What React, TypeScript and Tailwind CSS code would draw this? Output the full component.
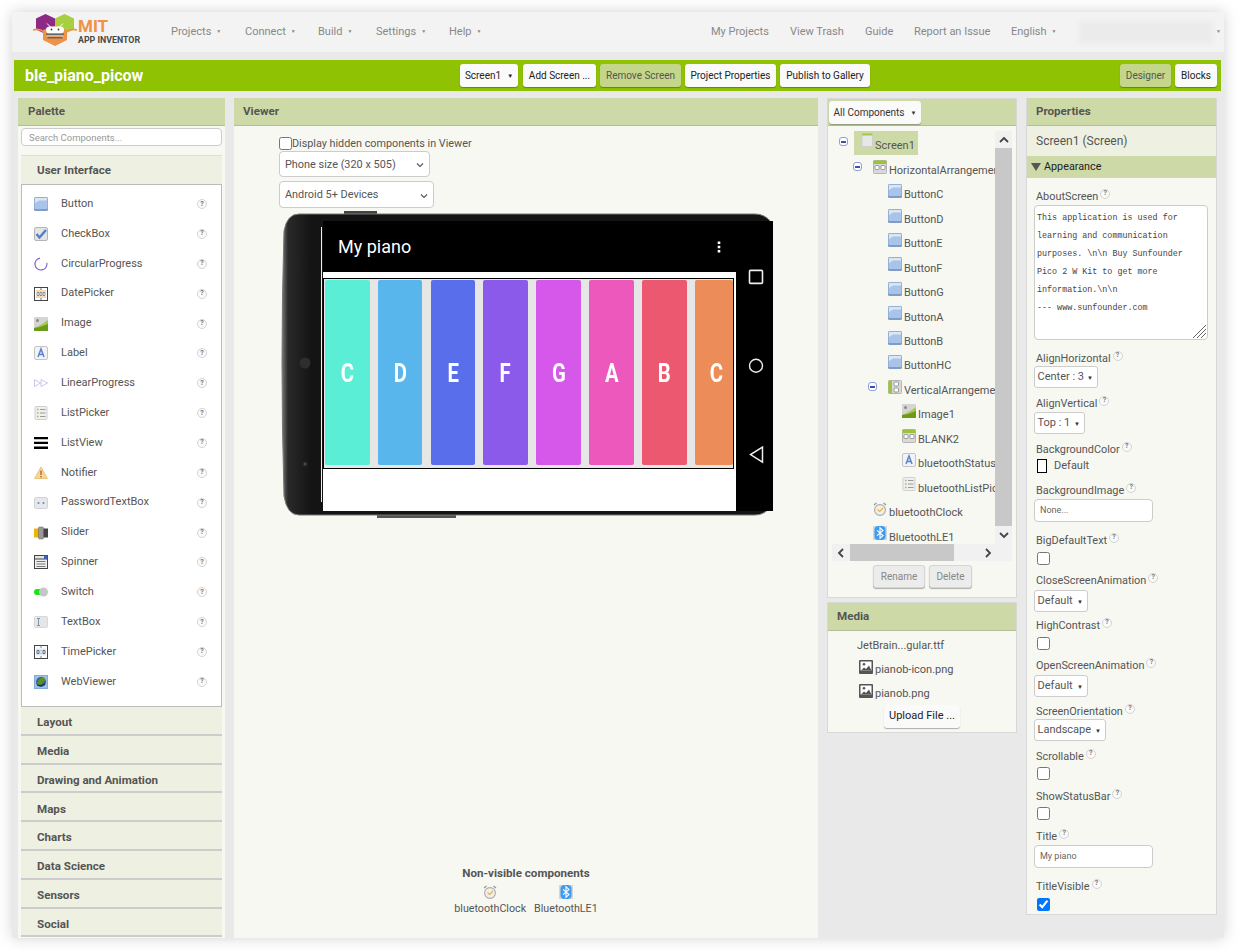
import React from "react";

const font = "font-['Roboto','Liberation_Sans',sans-serif]";

function Icon({ kind, className = "" }: { kind: string; className?: string }) {
  const c = `w-[14px] h-[14px] shrink-0 ${className}`;
  switch (kind) {
    case "button":
      return (
        <svg viewBox="0 0 14 14" className={c}>
          <rect x="0" y="0" width="14" height="14" rx="1.5" fill="#7f9cc9" />
          <rect x="0.5" y="0.5" width="13" height="11.5" rx="1" fill="#a9c4e8" />
          <path d="M1 1h12v2.5H5L1 6z" fill="#dbe6f5" />
        </svg>
      );
    case "checkbox":
      return (
        <svg viewBox="0 0 14 14" className={c}>
          <rect x="0.5" y="0.5" width="13" height="13" rx="1.5" fill="#e4e4e4" stroke="#b5b5b5" />
          <path d="M2.5 7l3 3.5L12 3" fill="none" stroke="#4f7fc9" strokeWidth="2.4" />
        </svg>
      );
    case "circular":
      return (
        <svg viewBox="0 0 14 14" className={c}>
          <path d="M13 7A6 6 0 1 1 7 1" fill="none" stroke="#7b5bc9" strokeWidth="1.1" transform="rotate(-10 7 7)" />
        </svg>
      );
    case "date":
      return (
        <svg viewBox="0 0 14 14" className={c}>
          <rect x="0.5" y="0.5" width="13" height="13" fill="#fff" stroke="#444" />
          <rect x="2" y="3.5" width="10" height="1" fill="#f3b46b" />
          <rect x="2" y="9.5" width="10" height="1" fill="#f3b46b" />
          <path d="M3 5.5h2v3H3zM6 5.5h2v3H6zM9 5.5h2v3H9z" fill="none" stroke="#666" strokeWidth="0.7" />
          <path d="M7 1l1.2 1.5H5.8zM7 13l1.2-1.5H5.8z" fill="#555" />
        </svg>
      );
    case "image":
      return (
        <svg viewBox="0 0 14 14" className={c}>
          <rect width="14" height="14" rx="1" fill="#d5d5d5" />
          <circle cx="3.5" cy="3.5" r="1.5" fill="#8a8a8a" />
          <path d="M0 11Q6 9 14 3v8z" fill="#a3c94a" />
          <path d="M0 11Q8 10 14 7v7H0z" fill="#6e9a1c" />
        </svg>
      );
    case "label":
      return (
        <svg viewBox="0 0 14 14" className={c}>
          <rect x="0.5" y="0.5" width="13" height="13" rx="1.5" fill="#f1f3f8" stroke="#c4c4c4" />
          <path d="M4 11l3-8 3 8M5.2 8.5h3.6" fill="none" stroke="#5b84c8" strokeWidth="1.5" />
        </svg>
      );
    case "linear":
      return (
        <svg viewBox="0 0 14 14" className={c}>
          <path d="M0.5 3.5l6 3.5-6 3.5zM7 3.5l6.5 3.5L7 10.5z" fill="#fff" stroke="#c3b6ea" strokeWidth="0.8" />
        </svg>
      );
    case "listpicker":
      return (
        <svg viewBox="0 0 14 14" className={c}>
          <rect x="1" y="0.5" width="12" height="13" rx="1" fill="#efefef" stroke="#d0d0d0" />
          <path d="M3 3.5h1.5M3 7h1.5M3 10.5h1.5" stroke="#9fc23c" strokeWidth="1.4" />
          <path d="M6 3.5h5.5M6 7h5.5M6 10.5h5.5" stroke="#999" strokeWidth="1" />
        </svg>
      );
    case "listview":
      return (
        <svg viewBox="0 0 14 14" className={c}>
          <path d="M0 1h14v2.3H0zM0 5.8h14v2.3H0zM0 10.6h14v2.3H0z" fill="#000" />
        </svg>
      );
    case "notifier":
      return (
        <svg viewBox="0 0 14 14" className={c}>
          <path d="M7 1l6.5 11.5H.5z" fill="#f6d79b" stroke="#e0b35c" strokeWidth="0.7" />
          <path d="M7 4.5v4.5M7 10v1.5" stroke="#b4662a" strokeWidth="1.4" />
        </svg>
      );
    case "password":
      return (
        <svg viewBox="0 0 14 14" className={c}>
          <rect x="0.5" y="1.5" width="13" height="11" rx="1.5" fill="#e8e8ec" stroke="#d3d3d3" />
          <circle cx="4.5" cy="7" r="1.1" fill="#6d8fcb" />
          <circle cx="9.5" cy="7" r="1.1" fill="#6d8fcb" />
        </svg>
      );
    case "slider":
      return (
        <svg viewBox="0 0 14 14" className={c}>
          <rect x="0" y="2.5" width="6" height="9" fill="#f0b400" />
          <rect x="9" y="2.5" width="5" height="9" fill="#444" />
          <rect x="4.5" y="1" width="5" height="12" rx="1" fill="#999" stroke="#666" strokeWidth="0.5" />
        </svg>
      );
    case "spinner":
      return (
        <svg viewBox="0 0 14 14" className={c}>
          <rect x="0.5" y="0.5" width="13" height="13" fill="#f0f0f0" stroke="#444" />
          <rect x="0.5" y="0.5" width="13" height="3.5" fill="#e5e5e5" stroke="#444" />
          <rect x="10" y="0.5" width="3.5" height="3.5" fill="#3f62b5" />
          <path d="M2.5 6.5h9M2.5 9h9M2.5 11.5h9" stroke="#777" />
        </svg>
      );
    case "switch":
      return (
        <svg viewBox="0 0 14 14" className={c}>
          <rect x="0" y="4" width="10" height="6" rx="3" fill="#15e615" />
          <circle cx="9.5" cy="7" r="4.5" fill="#c6c6c6" />
        </svg>
      );
    case "textbox":
      return (
        <svg viewBox="0 0 14 14" className={c}>
          <rect x="0.5" y="1.5" width="13" height="11" rx="1" fill="#e6e6e6" stroke="#d8d8d8" />
          <path d="M3 3.5h3M3 10.5h3M4.5 3.5v7" stroke="#7d92b9" fill="none" />
        </svg>
      );
    case "time":
      return (
        <svg viewBox="0 0 14 14" className={c}>
          <rect x="0.5" y="0.5" width="13" height="13" fill="#fff" stroke="#444" />
          <rect x="2" y="3.5" width="10" height="7" fill="#dfeaf7" />
          <path d="M3 5.5h2v3H3zM9 5.5h2v3H9zM7 5.5v.6M7 8v.6" fill="none" stroke="#555" strokeWidth="0.8" />
          <path d="M7 1l1.2 1.5H5.8zM7 13l1.2-1.5H5.8z" fill="#5176b5" />
        </svg>
      );
    case "web":
      return (
        <svg viewBox="0 0 14 14" className={c}>
          <rect width="14" height="14" fill="#9cc0e8" stroke="#6d97cf" />
          <circle cx="7" cy="7" r="5" fill="#2f5ea8" />
          <path d="M3 8Q4 3 9 2.5q3 1 2 3-3 3-5 5-2 0-3-2.5z" fill="#5d8f28" />
          <path d="M3 10q4 2 8-1" stroke="#222" fill="none" />
        </svg>
      );
    case "screen":
      return (
        <svg viewBox="0 0 14 14" className={c}>
          <rect x="2" y="0.5" width="10.5" height="13" rx="1" fill="#e7e7e7" stroke="#cfcfcf" />
          <rect x="2" y="0.5" width="10.5" height="2" fill="#a3c94a" />
        </svg>
      );
    case "hor":
      return (
        <svg viewBox="0 0 14 14" className={c}>
          <rect x="0.5" y="0.5" width="13" height="13" rx="1" fill="#d9d9d9" stroke="#b5b5b5" />
          <rect x="0.5" y="0.5" width="13" height="3.5" fill="#9dc33c" />
          <rect x="2" y="5.5" width="4" height="4" rx="1" fill="#fff" stroke="#777" strokeWidth="0.7" />
          <rect x="8" y="5.5" width="4" height="4" rx="1" fill="#fff" stroke="#777" strokeWidth="0.7" />
        </svg>
      );
    case "ver":
      return (
        <svg viewBox="0 0 14 14" className={c}>
          <rect x="0.5" y="0.5" width="13" height="13" rx="1" fill="#d9d9d9" stroke="#b5b5b5" />
          <rect x="0.5" y="0.5" width="3.5" height="13" fill="#9dc33c" />
          <rect x="6" y="2" width="4.5" height="4" rx="1" fill="#fff" stroke="#777" strokeWidth="0.7" />
          <rect x="6" y="8" width="4.5" height="4" rx="1" fill="#fff" stroke="#777" strokeWidth="0.7" />
        </svg>
      );
    case "clock":
      return (
        <svg viewBox="0 0 14 14" className={c}>
          <circle cx="7" cy="8" r="5.4" fill="#f1efe6" stroke="#aaa" strokeWidth="1.1" />
          <path d="M4.5 7.5l2.2 2L10 6" stroke="#eeb04c" strokeWidth="1.2" fill="none" />
          <path d="M1 3l2.5-2M13 3l-2.5-2" stroke="#999" strokeWidth="1.4" />
        </svg>
      );
    case "ble":
      return (
        <svg viewBox="0 0 14 14" className={c}>
          <rect width="14" height="14" fill="#d5d5d5" />
          <rect x="1.5" y="0" width="11" height="14" rx="4" fill="#3d9bf0" />
          <path d="M4 4.3l6 5.2-3 2.8V1.7l3 2.8-6 5.2" fill="none" stroke="#fff" strokeWidth="1.1" />
        </svg>
      );
    case "media":
      return (
        <svg viewBox="0 0 14 14" className={c}>
          <rect width="14" height="14" rx="1" fill="#555" />
          <rect x="1.5" y="1.5" width="11" height="9" fill="#fff" />
          <circle cx="5" cy="4.3" r="1.3" fill="#555" />
          <path d="M2 10.5l3-3 2 1.5 3-3.5 2.5 5z" fill="#555" />
        </svg>
      );
    default:
      return null;
  }
}

function Logo() {
  return (
    <svg viewBox="0 0 44 36" className="h-[36px] w-[44px] shrink-0">
      <path d="M3 4.5L12.5 0 22 4.5v11L12.5 20 3 15.5z" fill="#8e2a85" />
      <path d="M22 4.5L31.5 0 41 4.5v11L31.5 20 22 15.5z" fill="#a7d041" />
      <path d="M0 16q6-2 11 2M44 16q-6-2-11 2" stroke="#ef9147" strokeWidth="1.6" fill="none" />
      <path d="M10 16l12-4 12 4v10l-12 6-12-6z" fill="#ef9147" />
      <path d="M14 9.5l3.5 3.5M30 9.5L26.5 13" stroke="#fff" strokeWidth="1" />
      <rect x="13" y="12.5" width="18" height="7" rx="3.5" fill="#fff" />
      <circle cx="18.5" cy="15.5" r="0.9" fill="#333" />
      <circle cx="25.5" cy="15.5" r="0.9" fill="#333" />
      <rect x="13" y="19.5" width="18" height="1.6" fill="#666" />
      <rect x="13.5" y="21.1" width="17" height="1.8" fill="#f5b27a" />
      <rect x="14.5" y="22.9" width="15" height="1.6" fill="#666" />
    </svg>
  );
}

function Help({ className = "" }: { className?: string }) {
  return (
    <span className={`flex h-[10px] w-[10px] shrink-0 items-center justify-center rounded-full border border-[#d4d4d4] bg-[#fafafa] text-[7px] font-bold leading-none text-[#777] ${className}`}>
      ?
    </span>
  );
}

function Head({ children }: { children: React.ReactNode }) {
  return (
    <div className="flex h-[28px] items-center border-b border-[#b5bd9d] bg-[#cddaa8] pl-[9px] pt-[1px] text-[11.6px] font-bold text-[#555]">
      {children}
    </div>
  );
}

function Btn({ children, className = "", tone = "bg-[#fafafa] text-[#222]" }: { children: React.ReactNode; className?: string; tone?: string }) {
  return (
    <div className={`flex h-[23px] shrink-0 items-center justify-center whitespace-nowrap rounded-[3px] text-[10px] shadow-[0_1px_1px_rgba(0,0,0,0.3)] ${tone} ${className}`}>
      {children}
    </div>
  );
}

const palette: [string, string][] = [
  ["button", "Button"],
  ["checkbox", "CheckBox"],
  ["circular", "CircularProgress"],
  ["date", "DatePicker"],
  ["image", "Image"],
  ["label", "Label"],
  ["linear", "LinearProgress"],
  ["listpicker", "ListPicker"],
  ["listview", "ListView"],
  ["notifier", "Notifier"],
  ["password", "PasswordTextBox"],
  ["slider", "Slider"],
  ["spinner", "Spinner"],
  ["switch", "Switch"],
  ["textbox", "TextBox"],
  ["time", "TimePicker"],
  ["web", "WebViewer"],
];

const categories = ["Layout", "Media", "Drawing and Animation", "Maps", "Charts", "Data Science", "Sensors", "Social"];

function Palette() {
  return (
    <div className="w-[207px] shrink-0 bg-[#f7f8f2]">
      <Head>
        <span className="ml-px">Palette</span>
      </Head>
      <div className="px-[3px] pt-[2px]">
        <div className="flex h-[18px] items-center rounded-[4px] border border-[#ccc] bg-white pl-[7px] pt-[2px] text-[9.5px] text-[#999]">
          Search Components...
        </div>
        <div className="mt-[9px] flex h-[29px] items-center border-t border-[#ddd] bg-[#eef1e1] pl-[16px] pt-[2px] text-[11.6px] font-bold text-[#555]">
          User Interface
        </div>
        <div className="h-[523px] border border-[#bbb] bg-white pt-[4.15px]">
          {palette.map(([k, n]) => (
            <div key={n} className="flex h-[29.87px] items-center pl-[12px] pr-[14px] text-[11px] text-[#555]">
              <Icon kind={k} />
              <span className="ml-[13px] flex-1">{n}</span>
              <Help />
            </div>
          ))}
        </div>
        {categories.map((n) => (
          <div key={n} className="flex h-[28.8px] items-center border-b-2 border-[#ccc] bg-[#eef1e1] pl-[16px] pt-[5px] text-[11.6px] font-bold text-[#555]">
            {n}
          </div>
        ))}
      </div>
    </div>
  );
}

function Key({ note, color, w }: { note: string; color: string; w: string }) {
  return (
    <div className={`flex h-[185px] shrink-0 items-center justify-center rounded-[2px] pt-[2px] text-[26px] font-bold text-white ${color} ${w}`}>
      <span className="inline-block scale-x-[0.78]">{note}</span>
    </div>
  );
}

function Phone() {
  return (
    <div className="relative ml-[2px] mt-[3px] h-[307px] w-[492px]">
      <svg viewBox="0 0 492 307" className="absolute inset-0 h-full w-full">
        <defs>
          <linearGradient id="bez" x1="0" x2="1" y1="0" y2="0">
            <stop offset="0" stopColor="#777" />
            <stop offset="0.012" stopColor="#2a2a2a" />
            <stop offset="0.06" stopColor="#141414" />
          </linearGradient>
        </defs>
        <rect x="63" y="0" width="33" height="4" fill="#444" />
        <rect x="96" y="302" width="79" height="5" fill="#555" />
        <path d="M18 3H474q10 0 16 8V295q-6 9-16 9H18Q6 304 3 285-1 150 3 20 6 3 18 3z" fill="url(#bez)" stroke="#777" strokeWidth="1" />
        <circle cx="24" cy="152" r="5.5" fill="#2e2e2e" />
        <circle cx="24" cy="253" r="2.6" fill="#2a2a2a" />
        <circle cx="24" cy="253" r="1" fill="#557" />
        <circle cx="24" cy="47" r="1.5" fill="#1c1c1c" />
        <circle cx="24" cy="57" r="1.5" fill="#1c1c1c" />
        <rect x="40" y="16" width="1" height="275" fill="#eee" />
      </svg>
      <div className="absolute left-[42px] top-[10px] flex h-[289.5px] w-[450px]">
        <div className="flex w-[413px] flex-col bg-white">
          <div className="flex h-[51px] items-center justify-between bg-black pl-[15px] pr-[15px]">
            <span className="text-[18px] text-white">My piano</span>
            <svg viewBox="0 0 4 12" className="h-[12px] w-[4px]">
              <path d="M.7 .5h2.6v2.4H.7zM.7 4.8h2.6v2.4H.7zM.7 9.1h2.6v2.4H.7z" fill="#fff" />
            </svg>
          </div>
          <div className="mt-[6px] flex h-[191px] w-[411px] items-start gap-x-[8px] border border-black bg-[#e6e6e6] pl-[1px] pt-[1px]">
            <Key note="C" color="bg-[#5beed6]" w="w-[45px]" />
            <Key note="D" color="bg-[#58b6ec]" w="w-[44px]" />
            <div className="ml-px">
              <Key note="E" color="bg-[#586eea]" w="w-[44px]" />
            </div>
            <Key note="F" color="bg-[#8b5aea]" w="w-[45px]" />
            <Key note="G" color="bg-[#d658ea]" w="w-[45px]" />
            <Key note="A" color="bg-[#ec58bc]" w="w-[45px]" />
            <Key note="B" color="bg-[#ec5870]" w="w-[45px]" />
            <Key note="C" color="bg-[#ec8c58] pl-[6px]" w="w-[38px]" />
          </div>
        </div>
        <div className="relative w-[37px] bg-black">
          <svg viewBox="0 0 37 290" className="absolute inset-0 h-full w-full">
            <rect x="13.5" y="49.5" width="13" height="13" rx="1" fill="none" stroke="#eee" strokeWidth="1.6" />
            <circle cx="20" cy="145" r="6.5" fill="none" stroke="#eee" strokeWidth="1.4" />
            <path d="M26.5 226.5v15l-12-7.5z" fill="none" stroke="#eee" strokeWidth="1.5" />
          </svg>
        </div>
      </div>
    </div>
  );
}

function ViewSelect({ v, className = "" }: { v: string; className?: string }) {
  return (
    <div className={`flex items-center justify-between rounded-[4px] border border-[#ccc] bg-white pl-[5px] pr-[5px] pt-[2px] text-[10.9px] text-[#555] ${className}`}>
      <span className="whitespace-nowrap">{v}</span>
      <svg viewBox="0 0 8 6" className="h-[6px] w-[8px]">
        <path d="M1 1.5l3 3 3-3" fill="none" stroke="#555" strokeWidth="1.1" />
      </svg>
    </div>
  );
}

function Viewer() {
  return (
    <div className="flex h-[840px] w-[584px] shrink-0 flex-col bg-[#f7f8f2]">
      <Head>Viewer</Head>
      <div className="pl-[45px] pt-[10px]">
        <label className="flex h-[14px] items-center text-[10.8px] text-[#555]">
          <input type="checkbox" className="m-0 h-[13px] w-[13px]" />
          <span className="mt-[2px]">Display hidden components in Viewer</span>
        </label>
        <ViewSelect v="Phone size (320 x 505)" className="mt-[1px] h-[26px] w-[151px]" />
        <ViewSelect v="Android 5+ Devices" className="mt-[4px] h-[27px] w-[155px]" />
        <Phone />
      </div>
      <div className="mt-[347px] flex flex-col items-center">
        <div className="text-[11.6px] font-bold leading-[16px] text-[#555]">Non-visible components</div>
        <div className="mt-[4px] flex gap-x-[8px] text-[10.7px] leading-[14px] text-[#555]">
          <div className="flex flex-col items-center">
            <Icon kind="clock" />
            <span className="mt-[3px]">bluetoothClock</span>
          </div>
          <div className="flex flex-col items-center">
            <Icon kind="ble" />
            <span className="mt-[3px]">BluetoothLE1</span>
          </div>
        </div>
      </div>
    </div>
  );
}

const tree: { k: string; n: string; pad: string; minus?: boolean }[] = [
  { k: "hor", n: "HorizontalArrangement1", pad: "pl-[29px]", minus: true },
  { k: "button", n: "ButtonC", pad: "pl-[60px]" },
  { k: "button", n: "ButtonD", pad: "pl-[60px]" },
  { k: "button", n: "ButtonE", pad: "pl-[60px]" },
  { k: "button", n: "ButtonF", pad: "pl-[60px]" },
  { k: "button", n: "ButtonG", pad: "pl-[60px]" },
  { k: "button", n: "ButtonA", pad: "pl-[60px]" },
  { k: "button", n: "ButtonB", pad: "pl-[60px]" },
  { k: "button", n: "ButtonHC", pad: "pl-[60px]" },
  { k: "ver", n: "VerticalArrangement1", pad: "pl-[44px]", minus: true },
  { k: "image", n: "Image1", pad: "pl-[74px]" },
  { k: "hor", n: "BLANK2", pad: "pl-[74px]" },
  { k: "label", n: "bluetoothStatus", pad: "pl-[74px]" },
  { k: "listpicker", n: "bluetoothListPicker", pad: "pl-[74px]" },
  { k: "clock", n: "bluetoothClock", pad: "pl-[45px]" },
  { k: "ble", n: "BluetoothLE1", pad: "pl-[45px]" },
];

function Minus({ className = "" }: { className?: string }) {
  return (
    <span className={`flex h-[9px] w-[9px] shrink-0 items-center justify-center rounded-[3px] border border-[#8f9ee0] bg-white ${className}`}>
      <span className="h-[2px] w-[5px] bg-[#3f4fa8]" />
    </span>
  );
}

function Chevron({ d }: { d: string }) {
  return (
    <svg viewBox="0 0 10 10" className="h-[10px] w-[10px]">
      <path d={d} fill="none" stroke="#444" strokeWidth="1.8" />
    </svg>
  );
}

function Tree() {
  return (
    <div className="w-[190px] shrink-0">
      <div className="border border-[#d8d8d8] bg-[#f7f8f2]">
        <div className="flex h-[27px] items-start border-b border-[#b5bd9d] bg-[#cddaa8] pl-[1px] pt-[2px]">
          <Btn className="h-[21px] w-[92px] gap-[6px] pb-[1px]" tone="bg-[#fafafa] text-[#333]">
            All Components <span className="text-[6px]">▼</span>
          </Btn>
        </div>
        <div className="ml-[4px] mt-[5px] flex h-[430px] w-[180px] flex-wrap content-start">
          <div className="h-[413px] w-[163px] overflow-hidden text-[11px] leading-none text-[#555]">
            <div className="flex h-[26px] items-start pl-[7px]">
              <Minus className="mt-[6px]" />
              <div className="ml-[6px] flex h-[24px] w-[64px] items-center bg-[#cddaa8] pl-[7px]">
                <Icon kind="screen" className="-ml-[1px] mb-[6px]" />
                <span className="ml-[1px] mt-[4px] whitespace-nowrap">Screen1</span>
              </div>
            </div>
            {tree.map((t) => (
              <div key={t.n} className={`-ml-[4px] flex h-[24.45px] items-center whitespace-nowrap ${t.pad}`}>
                {t.minus && <Minus className="-ml-[4px] mb-[5px] mr-[11px]" />}
                <Icon kind={t.k} className="mb-[5px]" />
                <span className="ml-[2px] mt-[2.5px]">{t.n}</span>
              </div>
            ))}
          </div>
          <div className="flex h-[413px] w-[17px] flex-col">
            <div className="flex h-[17px] items-center justify-center bg-[#f1f1f1]">
              <Chevron d="M1 7l4-4 4 4" />
            </div>
            <div className="h-[378px] bg-[#c8c8c8]" />
            <div className="flex h-[18px] items-center justify-center bg-[#f1f1f1]">
              <Chevron d="M1 3l4 4 4-4" />
            </div>
          </div>
          <div className="flex h-[17px] w-[180px] bg-[#f1f1f1]">
            <div className="flex w-[18px] items-center justify-center">
              <Chevron d="M7 1L3 5l4 4" />
            </div>
            <div className="w-[104px] bg-[#c8c8c8]" />
            <div className="flex-1" />
            <div className="mr-[16px] flex w-[17px] items-center justify-center">
              <Chevron d="M3 1l4 4-4 4" />
            </div>
          </div>
        </div>
        <div className="mt-[4px] flex h-[32px] items-start gap-[4px] pl-[45px]">
          <Btn className="w-[52px] border border-[#d5d5d5] text-[10.5px]" tone="bg-[#ececec] text-[#888]">Rename</Btn>
          <Btn className="w-[43px] border border-[#d5d5d5] text-[10.5px]" tone="bg-[#ececec] text-[#888]">Delete</Btn>
        </div>
      </div>
      <div className="mt-[4px] h-[131px] border border-[#d8d8d8] bg-[#f7f8f2] text-[11px] text-[#555]">
        <Head>Media</Head>
        <div className="ml-[29px] mt-[8px] leading-[14px]">JetBrain...gular.ttf</div>
        <div className="ml-[31px] mt-[4px] flex h-[24px] items-center">
          <Icon kind="media" className="mb-[5px]" />
          <span className="ml-[2px] mt-[3px]">pianob-icon.png</span>
        </div>
        <div className="ml-[31px] flex h-[24px] items-center">
          <Icon kind="media" className="mb-[5px]" />
          <span className="ml-[2px] mt-[3px]">pianob.png</span>
        </div>
        <Btn className="ml-[56px] mt-0 h-[22px] w-[76px] text-[11px]">Upload File ...</Btn>
      </div>
    </div>
  );
}

function Label({ n, className = "" }: { n: string; className?: string }) {
  return (
    <div className={`flex h-[16px] items-center pl-[2px] text-[10.9px] text-[#555] ${className}`}>
      <span>{n}</span>
      <Help className="mb-[7px] ml-[2px]" />
    </div>
  );
}

function Drop({ v, w, className = "" }: { v: string; w: string; className?: string }) {
  return (
    <div className={`flex h-[22px] items-center justify-between rounded-[3px] border border-[#ccc] bg-white pl-[2.5px] pr-[4px] text-[11px] text-[#555] ${w} ${className}`}>
      <span className="whitespace-nowrap">{v}</span>
      <span className="text-[6px] text-[#333]">▼</span>
    </div>
  );
}

function Text({ v, className = "" }: { v: string; className?: string }) {
  return (
    <div className={`flex h-[23px] w-[119px] items-center rounded-[4px] border border-[#ccc] bg-white pl-[5px] text-[9px] text-[#666] ${className}`}>
      {v}
    </div>
  );
}

function Check({ className = "", on }: { className?: string; on?: boolean }) {
  return <input type="checkbox" defaultChecked={on} className={`m-0 ml-[3px] block h-[13px] w-[13px] ${className}`} />;
}

const about = `This application is used for
learning and communication
purposes. \\n\\n Buy Sunfounder
Pico 2 W Kit to get more
information.\\n\\n
--- www.sunfounder.com`;

function Properties() {
  return (
    <div className="h-[817px] w-[191px] shrink-0 border border-t-0 border-[#d8d8d8] bg-[#f7f8f2]">
      <Head>Properties</Head>
      <div className="flex h-[30px] items-center bg-[#eef1e1] pl-[9px] text-[12px] text-[#555]">Screen1 (Screen)</div>
      <div className="flex h-[22px] items-center gap-[3px] bg-[#cddaa8] pl-[4px] text-[10.8px] text-[#222]">
        <svg viewBox="0 0 10 10" className="h-[10px] w-[10px]">
          <path d="M0 1h10L5 9z" fill="#555" />
        </svg>
        Appearance
      </div>
      <div className="pl-[7px]">
        <Label n="AboutScreen" className="mt-[11px]" />
        <div className="relative mt-0 h-[135px] w-[174px]">
          <textarea
            readOnly
            value={about}
            className="block h-full w-full resize-none rounded-[4px] border border-[#ccc] bg-white pl-[2px] pt-[3px] font-['Liberation_Mono',monospace] text-[8.4px] leading-[18px] text-[#444]"
          />
          <svg viewBox="0 0 15 15" className="absolute bottom-[1px] right-[1px] h-[15px] w-[15px]">
            <path d="M1 14L14 1M5 14L14 5M9 14l5-5" stroke="#666" strokeWidth="1" />
          </svg>
        </div>
        <Label n="AlignHorizontal" className="mt-[11px]" />
        <Drop v="Center : 3" w="w-[64px]" className="-mt-[1px]" />
        <Label n="AlignVertical" className="mt-[8px]" />
        <Drop v="Top : 1" w="w-[51px]" />
        <Label n="BackgroundColor" className="mt-[8px]" />
        <div className="flex h-[16px] items-center pl-[3px] text-[11px] text-[#555]">
          <span className="h-[14px] w-[10px] border border-black bg-white" />
          <span className="ml-[7px]">Default</span>
        </div>
        <Label n="BackgroundImage" className="mt-[9px]" />
        <Text v="None..." />
        <Label n="BigDefaultText" className="mt-[11px]" />
        <Check className="mt-[3px]" />
        <Label n="CloseScreenAnimation" className="mt-[8px]" />
        <Drop v="Default" w="w-[54px]" className="mt-[1px]" />
        <Label n="HighContrast" className="mt-[6px]" />
        <Check className="mt-[3px]" />
        <Label n="OpenScreenAnimation" className="mt-[8px]" />
        <Drop v="Default" w="w-[54px]" className="mt-[1px]" />
        <Label n="ScreenOrientation" className="mt-[7px]" />
        <Drop v="Landscape" w="w-[72px]" className="-mt-[1px]" />
        <Label n="Scrollable" className="mt-[8px]" />
        <Check className="mt-[2px]" />
        <Label n="ShowStatusBar" className="mt-[9px]" />
        <Check className="mt-[2px]" />
        <Label n="Title" className="mt-[9px]" />
        <Text v="My piano" />
        <Label n="TitleVisible" className="mt-[11px]" />
        <Check className="mt-[3px]" on />
      </div>
    </div>
  );
}

function Menu({ n, w }: { n: string; w: string }) {
  return (
    <div className={`flex items-center whitespace-nowrap ${w}`}>
      {n}
      <span className="ml-[5px] text-[5px]">▼</span>
    </div>
  );
}

export default function App() {
  return (
    <div className={`h-[951px] w-[1237px] overflow-hidden bg-white pl-[12px] pt-[12px] ${font}`}>
      <div className="h-[926px] w-[1212px] overflow-hidden bg-[#e9e9e9] shadow-[0_0_14px_rgba(0,0,0,0.18)]">
        <div className="flex h-[40px] items-center bg-[#f3f3f3] pl-[21px] text-[11px] text-[#888]">
          <Logo />
          <div className="ml-[1px] flex w-[93px] flex-col">
            <span className="text-[17px] font-bold leading-[15px] text-[#ef9147]">MIT</span>
            <span className="mt-[1px] text-[8.8px] font-bold leading-[10px] text-[#4a4a4a]">APP INVENTOR</span>
          </div>
          <Menu n="Projects" w="w-[74px]" />
          <Menu n="Connect" w="w-[73px]" />
          <Menu n="Build" w="w-[58px]" />
          <Menu n="Settings" w="w-[73px]" />
          <Menu n="Help" w="w-[262px]" />
          <span className="w-[79px]">My Projects</span>
          <span className="w-[75px]">View Trash</span>
          <span className="w-[49px]">Guide</span>
          <span className="w-[97px]">Report an Issue</span>
          <Menu n="English" w="w-[68px]" />
          <div className="h-[23px] w-[134px] bg-[#ebebeb] blur-[2px]" />
          <span className="ml-[3px] text-[5px]">▼</span>
        </div>
        <div className="ml-[2px] mt-[8px] flex h-[31px] w-[1207px] items-center bg-[#8fc202] pl-[11px]">
          <div className="w-[435px] text-[16px] font-bold text-white">ble_piano_picow</div>
          <div className="flex gap-[4px]">
            <Btn className="mr-px w-[58px] gap-[6px]">
              Screen1 <span className="text-[6px]">▼</span>
            </Btn>
            <Btn className="w-[73px]">Add Screen ...</Btn>
            <Btn className="w-[81px]" tone="bg-[#c4d68a] text-[#555]">Remove Screen</Btn>
            <Btn className="w-[91px]">Project Properties</Btn>
            <Btn className="w-[90px]">Publish to Gallery</Btn>
          </div>
          <div className="ml-[250px] flex gap-[4px]">
            <Btn className="w-[51px]" tone="bg-[#c4d68a] text-[#555]">Designer</Btn>
            <Btn className="w-[42px]">Blocks</Btn>
          </div>
        </div>
        <div className="mt-[7px] flex gap-x-[9px] pl-[6px]">
          <Palette />
          <Viewer />
          <Tree />
          <Properties />
        </div>
      </div>
    </div>
  );
}
